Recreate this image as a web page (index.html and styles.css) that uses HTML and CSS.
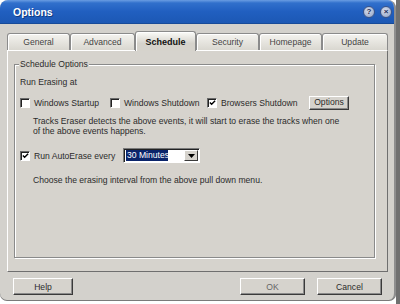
FILE: index.html
```html
<!DOCTYPE html>
<html lang="en">
<head>
  <meta charset="UTF-8">
  <meta name="viewport" content="width=device-width, initial-scale=1.0">
  <title>Options</title>
  <link rel="stylesheet" href="styles.css">
</head>
<body>
  <div class="window">
    <div class="titlebar">
      <span class="title">Options</span>
      <div class="caption-buttons">
        <span class="cap-btn">?</span>
        <span class="cap-btn">&#215;</span>
      </div>
    </div>

    <div class="frame">
      <!-- Tabs -->
      <div class="tabs">
        <div class="tab tab-general">General</div>
        <div class="tab tab-advanced">Advanced</div>
        <div class="tab tab-schedule active">Schedule</div>
        <div class="tab tab-security">Security</div>
        <div class="tab tab-homepage">Homepage</div>
        <div class="tab tab-update">Update</div>
      </div>

      <div class="panel">
        <div class="group">
          <span class="group-label">Schedule Options</span>

          <div class="line">Run Erasing at</div>

          <div class="check-row">
            <label class="check check-startup"><span class="box"></span>Windows Startup</label>
            <label class="check check-shutdown"><span class="box"></span>Windows Shutdown</label>
            <label class="check check-browsers"><span class="box checked"><svg width="8" height="8" viewBox="0 0 8 8"><polyline points="1,3.5 3,5.5 7,1.5" fill="none" stroke="#000" stroke-width="1.6"/></svg></span>Browsers Shutdown</label>
            <button class="btn btn-small">Options</button>
          </div>

          <div class="desc">Tracks Eraser detects the above events, it will start to erase the tracks when one<br>of the above events happens.</div>

          <div class="auto-row">
            <label class="check check-auto"><span class="box checked"><svg width="8" height="8" viewBox="0 0 8 8"><polyline points="1,3.5 3,5.5 7,1.5" fill="none" stroke="#000" stroke-width="1.6"/></svg></span>Run AutoErase every</label>
            <div class="select">
              <span class="select-value">30 Minutes</span>
              <span class="select-arrow"><svg width="7" height="4" viewBox="0 0 7 4"><polygon points="0,0 7,0 3.5,4" fill="#000"/></svg></span>
            </div>
          </div>

          <div class="desc desc-choose">Choose the erasing interval from the above pull down menu.</div>
        </div>
      </div>

      <div class="footer">
        <button class="btn btn-help">Help</button>
        <div class="footer-right">
          <button class="btn btn-ok">OK</button>
          <button class="btn btn-cancel">Cancel</button>
        </div>
      </div>
    </div>
  </div>
</body>
</html>
```

FILE: styles.css
```css
body {
  margin: 0;
  font-family: "Liberation Sans", Arial, sans-serif;
  font-size: 8.6px;
  color: #2b2b2b;
  background: linear-gradient(to right, #fff 396px, #707070 396px);
  height: 304px;
  overflow: hidden;
}

.window {
  width: 394px;
  height: 300px;
  background-color: #d3d1cc;
  border-radius: 8px 8px 7px 7px;
  border-right: 2px solid #8e8e8e;
  box-shadow: 0 1px 0 #7a7a7a;
  overflow: hidden;
}

/* Title bar */
.titlebar {
  height: 24px;
  display: flex;
  align-items: center;
  justify-content: space-between;
  padding: 0 2px 0 13px;
  background: linear-gradient(#6a9de2 0, #3170cc 3px, #215fc0 50%, #1c58b4 100%);
  border-bottom: 1px solid #174a98;
  box-sizing: border-box;
}

.title {
  color: #fff;
  font-weight: bold;
  font-size: 10.5px;
  text-shadow: 1px 1px 0 #0f3a80;
}

.caption-buttons {
  display: flex;
  gap: 5px;
}

.cap-btn {
  width: 10px;
  height: 10px;
  border-radius: 50%;
  background: radial-gradient(circle at 40% 35%, #d6deee, #8d9fc2);
  border: 1px solid #3c5588;
  color: #1b2d57;
  font-size: 8px;
  font-weight: bold;
  line-height: 10px;
  text-align: center;
}

/* Frame below title */
.frame {
  padding: 7px 6px 0 7px;
}

.tabs {
  display: flex;
  align-items: flex-end;
  height: 19px;
}

.tab {
  height: 17px;
  box-sizing: border-box;
  border: 1px solid #8b8b8b;
  border-bottom: none;
  border-radius: 3px 3px 0 0;
  background: linear-gradient(#f4f3ef, #d9d7d0);
  box-shadow: inset 1px 1px 0 #fff;
  display: flex;
  align-items: center;
  justify-content: center;
  color: #444;
}

.tab-general { width: 63px; }
.tab-advanced { width: 65px; }
.tab-schedule { width: 61px; }
.tab-security { width: 63px; }
.tab-homepage { width: 63px; }
.tab-update { width: 66px; }

.tab.active {
  height: 20px;
  margin-bottom: -1px;
  background: linear-gradient(#fbfbf8, #d6d3cc 60%);
  font-weight: bold;
  font-size: 9px;
  color: #111;
  position: relative;
  z-index: 1;
}

.panel {
  height: 222px;
  box-sizing: border-box;
  border: 1px solid;
  border-color: #fff #6f6f6f #6f6f6f #fff;
  background-color: #d6d3cd;
  display: flex;
  flex-direction: column;
}

.group {
  position: relative;
  flex: 1;
  margin: 13px 12px 13px 6px;
  padding: 12px 6px 0 5px;
  border: 1px solid #8a8a8a;
  box-shadow: 1px 1px 0 #fff, inset 1px 1px 0 #fff;
}

.group-label {
  position: absolute;
  top: -6px;
  left: 4px;
  padding: 0 1px;
  line-height: 10px;
  background-color: #d6d3cd;
}

.line {
  line-height: 10px;
}

.check-row {
  display: flex;
  align-items: center;
  height: 15px;
  margin-top: 8px;
}

.check {
  display: flex;
  align-items: center;
  white-space: nowrap;
}

.check-startup { width: 90px; }
.check-shutdown { width: 97px; }
.check-browsers { width: 102px; }
.check-auto { width: 103px; }

.box {
  width: 10px;
  height: 10px;
  box-sizing: border-box;
  margin-right: 4px;
  background-color: #fff;
  border: 1px solid;
  border-color: #6a6a6a #fff #fff #6a6a6a;
  box-shadow: inset 1px 1px 0 #222;
  display: flex;
  align-items: center;
  justify-content: center;
}

.box svg {
  margin: 1px 0 0 1px;
}

.btn {
  font-family: inherit;
  font-size: inherit;
  color: #2b2b2b;
  background-color: #d6d3cd;
  border: 1px solid;
  border-color: #fff #3a3a3a #3a3a3a #fff;
  box-shadow: inset -1px -1px 0 #8a8a8a;
  padding: 0;
  cursor: pointer;
}

.btn-small {
  width: 40px;
  height: 14px;
  line-height: 11px;
}

.desc {
  margin: 6px 0 0 13px;
  line-height: 10px;
}

.auto-row {
  display: flex;
  align-items: center;
  height: 15px;
  margin-top: 12px;
}

.select {
  width: 77px;
  height: 15px;
  box-sizing: border-box;
  border: 1px solid;
  border-color: #7a7a7a #fff #fff #7a7a7a;
  box-shadow: inset 1px 1px 0 #222;
  background-color: #fff;
  display: flex;
  align-items: center;
  justify-content: space-between;
  padding: 1px 1px 1px 2px;
}

.select-value {
  background-color: #0a246a;
  color: #fff;
  line-height: 11px;
  padding: 0 1px;
  width: 40px;
  white-space: nowrap;
  overflow: hidden;
}

.select-arrow {
  width: 14px;
  height: 11px;
  box-sizing: border-box;
  background-color: #d6d3cd;
  border: 1px solid;
  border-color: #fff #3a3a3a #3a3a3a #fff;
  display: flex;
  align-items: center;
  justify-content: center;
}

.desc-choose {
  margin-top: 12px;
}

/* Bottom buttons */
.footer {
  display: flex;
  justify-content: space-between;
  padding: 6px 6px 0 6px;
}

.footer-right {
  display: flex;
  gap: 12px;
}

.footer .btn {
  height: 17px;
}

.btn-help { width: 60px; }
.btn-ok { width: 65px; color: #666; }
.btn-cancel { width: 65px; }
```
